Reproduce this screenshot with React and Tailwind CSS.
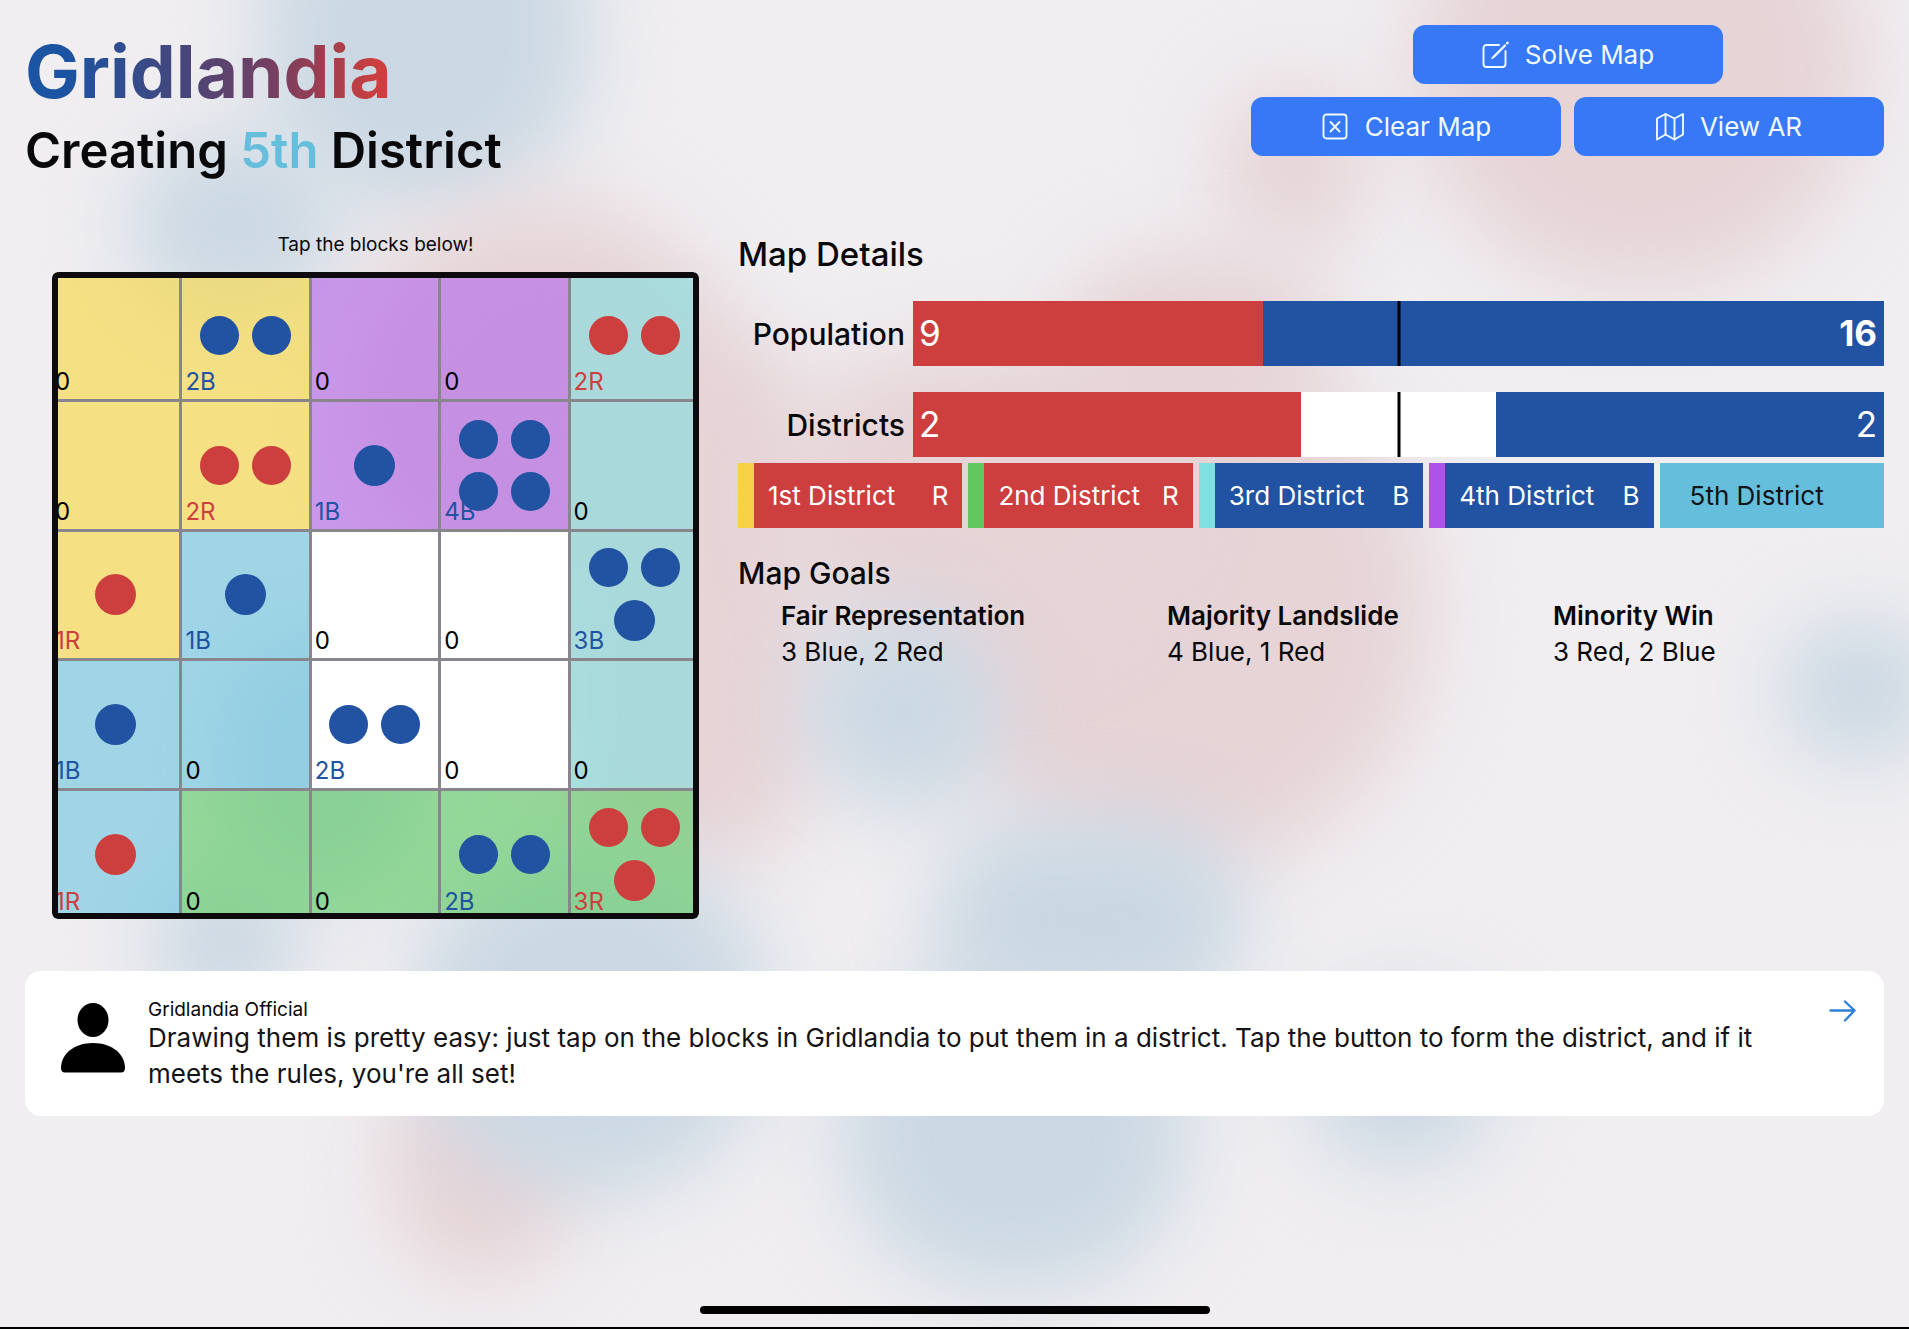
import React from "react";

const BLUE_HAZE = "#cbd8e3";
const RED_HAZE = "#e6d4d7";

const blobs = [
  { x: 425, y: 30, w: 330, h: 360, c: BLUE_HAZE },
  { x: 235, y: 225, w: 210, h: 180, c: BLUE_HAZE },
  { x: 225, y: 945, w: 150, h: 150, c: BLUE_HAZE },
  { x: 540, y: 400, w: 400, h: 400, c: RED_HAZE },
  { x: 690, y: 600, w: 260, h: 540, c: RED_HAZE },
  { x: 1640, y: 70, w: 450, h: 440, c: RED_HAZE },
  { x: 1295, y: 165, w: 150, h: 160, c: RED_HAZE },
  { x: 1200, y: 340, w: 260, h: 170, c: RED_HAZE },
  { x: 1180, y: 610, w: 500, h: 520, c: RED_HAZE },
  { x: 980, y: 500, w: 400, h: 300, c: RED_HAZE },
  { x: 480, y: 1170, w: 180, h: 220, c: RED_HAZE },
  { x: 320, y: 760, w: 200, h: 260, c: BLUE_HAZE },
  { x: 590, y: 1020, w: 360, h: 350, c: BLUE_HAZE },
  { x: 905, y: 710, w: 200, h: 200, c: BLUE_HAZE },
  { x: 1090, y: 920, w: 310, h: 210, c: BLUE_HAZE },
  { x: 1015, y: 1130, w: 350, h: 320, c: BLUE_HAZE },
  { x: 1400, y: 1080, w: 190, h: 170, c: BLUE_HAZE },
  { x: 1860, y: 690, w: 160, h: 140, c: BLUE_HAZE },
];

function Backdrop() {
  return (
    <div aria-hidden="true" className="pointer-events-none absolute inset-0 overflow-hidden">
      {blobs.map((b, i) => (
        <div
          key={i}
          className="absolute rounded-full blur-[40px]"
          style={{ left: b.x - b.w / 2, top: b.y - b.h / 2, width: b.w, height: b.h, background: b.c }}
        />
      ))}
    </div>
  );
}

const fills = {
  Y: "bg-[#f7d849]/65",
  P: "bg-[#b66ce8]/65",
  T: "bg-[#88dcdc]/65",
  C: "bg-[#74c8e0]/65",
  G: "bg-[#66cd6c]/65",
  W: "bg-white",
};

const board = [
  ["Y0", "Y2B", "P0", "P0", "T2R"],
  ["Y0", "Y2R", "P1B", "P4B", "T0"],
  ["Y1R", "C1B", "W0", "W0", "T3B"],
  ["C1B", "C0", "W2B", "W0", "T0"],
  ["C1R", "G0", "G0", "G2B", "G3R"],
];

function Cell({ code, row, col }) {
  const count = Number(code[1]);
  const party = code[2];
  const dot = party === "R" ? "bg-[#cc3f3e]" : "bg-[#2153a2]";
  const text = party === "R" ? "text-[#cc3f3e]" : party === "B" ? "text-[#2153a2]" : "text-black";
  const lines = [
    col > 0 ? "border-l" : "",
    col < 4 ? "border-r-2" : "",
    row > 0 ? "border-t" : "",
    row < 4 ? "border-b-2" : "",
  ].join(" ");
  return (
    <button
      type="button"
      aria-label={`Block ${row + 1}, ${col + 1}: ${code.slice(1)}`}
      className={`relative flex items-center justify-center bg-clip-padding ${fills[code[0]]} ${lines} border-[#88868c]`}
    >
      <span className={`absolute bottom-[3px] left-[3px] text-[24px] leading-7 ${text}`}>{code.slice(1)}</span>
      <span className={`relative flex flex-wrap justify-center gap-[13px] ${count === 1 ? "w-[41px]" : "w-[91px]"}`}>
        {Array.from({ length: count }, (_, i) => (
          <span
            key={i}
            className={`rounded-full ${dot} ${count % 2 === 1 && i === count - 1 ? "size-[41px]" : "size-[39px]"}`}
          />
        ))}
      </span>
    </button>
  );
}

function Board() {
  return (
    <section className="flex w-[647px] shrink-0 flex-col">
      <p className="mb-[13px] text-center text-[19px] leading-7">Tap the blocks below!</p>
      <div className="relative aspect-square overflow-hidden rounded-md">
        <div className="grid size-full grid-cols-5 grid-rows-5">
          {board.flatMap((r, y) => r.map((code, x) => <Cell key={`${x}-${y}`} code={code} row={y} col={x} />))}
        </div>
        <div className="pointer-events-none absolute inset-0 rounded-md border-6 border-[#0c0a0d]" />
      </div>
    </section>
  );
}

function EditIcon() {
  return (
    <svg viewBox="0 0 28 28" className="size-7" fill="none" stroke="currentColor" strokeWidth="1.900" strokeLinecap="round" strokeLinejoin="round">
      <path d="M18 4H5.500a3 3 0 0 0-3 3v16a3 3 0 0 0 3 3h16a3 3 0 0 0 3-3V10" />
      <path d="M12.500 16 24 4.500" strokeWidth="2.400" />
      <path d="M26.200 2.200l.3-.3" strokeWidth="2.600" />
      <path d="M11 17.500l1.500-1.500" strokeWidth="1.500" />
    </svg>
  );
}

function ClearIcon() {
  return (
    <svg viewBox="0 0 28 28" className="size-7" fill="none" stroke="currentColor" strokeWidth="1.900" strokeLinecap="round" strokeLinejoin="round">
      <rect x="2.500" y="1.500" width="23" height="24" rx="3" />
      <path d="M9.500 9l9 9.500M18.500 9l-9 9.500" />
    </svg>
  );
}

function MapIcon() {
  return (
    <svg viewBox="0 0 28 28" className="size-7" fill="none" stroke="currentColor" strokeWidth="1.900" strokeLinecap="round" strokeLinejoin="round">
      <path d="M1 5.500 9.500 1 18.500 5.500 27 1V21.500l-8.500 5-9-5L1 26.500z" />
      <path d="M9.500 1V21.500M18.500 5.500v21" />
    </svg>
  );
}

function ActionButton({ icon, children }) {
  return (
    <button type="button" className="flex h-[59px] w-[310px] items-center justify-center gap-4 rounded-xl bg-[#3678f5] text-[26px] text-[#eefaff]">
      {icon}
      {children}
    </button>
  );
}

function TallyBar({ label, red, blue, redShare, blueShare, boldBlue }) {
  return (
    <div className="flex items-center gap-2">
      <div className="w-[167px] text-right text-[30px] leading-9 font-medium">{label}</div>
      <div className="relative flex h-[65px] flex-1 justify-between bg-white text-[35px] text-white">
        <div className="flex items-center bg-[#cc3f3e] pl-[6px]" style={{ width: `${redShare}%` }}>{red}</div>
        <div className={`flex items-center justify-end bg-[#2153a2] pr-[7px] ${boldBlue ? "font-bold" : ""}`} style={{ width: `${blueShare}%` }}>{blue}</div>
        <div className="absolute inset-y-0 left-1/2 w-[3px] -translate-x-1/2 bg-black" />
      </div>
    </div>
  );
}

const districts = [
  { name: "1st District", party: "R", body: "bg-[#cc3f3e] text-white", stripe: "bg-[#f7d148]" },
  { name: "2nd District", party: "R", body: "bg-[#cc3f3e] text-white", stripe: "bg-[#62c75e]" },
  { name: "3rd District", party: "B", body: "bg-[#2153a2] text-white", stripe: "bg-[#80e0df]" },
  { name: "4th District", party: "B", body: "bg-[#2153a2] text-white", stripe: "bg-[#ac54e8]" },
  { name: "5th District", party: "", body: "bg-[#65bedc] text-[#101418]", stripe: "bg-[#65bedc]" },
];

const goals = [
  ["Fair Representation", "3 Blue, 2 Red"],
  ["Majority Landslide", "4 Blue, 1 Red"],
  ["Minority Win", "3 Red, 2 Blue"],
];

function Details() {
  return (
    <section className="flex min-w-0 flex-1 flex-col pt-[3px]">
      <h3 className="text-[33px] leading-10 font-medium">Map Details</h3>
      <div className="mt-[27px] flex flex-col gap-[26px]">
        <TallyBar label="Population" red="9" blue="16" redShare={36} blueShare={64} boldBlue />
        <TallyBar label="Districts" red="2" blue="2" redShare={40} blueShare={40} />
      </div>
      <ul className="mt-[6px] grid grid-cols-5 gap-[6px] text-[26px]">
        {districts.map((d) => (
          <li key={d.name} className={`flex h-[65px] ${d.body}`}>
            <span className={`w-4 ${d.stripe}`} />
            <span className="flex flex-1 items-center justify-between px-[14px] whitespace-nowrap">
              <span>{d.name}</span>
              <span>{d.party}</span>
            </span>
          </li>
        ))}
      </ul>
      <h3 className="mt-[25px] text-[30px] leading-10 font-medium">Map Goals</h3>
      <dl className="mt-[5px] grid grid-cols-3 gap-3 text-[26px] leading-9">
        {goals.map(([name, rule]) => (
          <div key={name} className="pl-[43px] whitespace-nowrap">
            <dt className="font-semibold">{name}</dt>
            <dd>{rule}</dd>
          </div>
        ))}
      </dl>
    </section>
  );
}

function Message() {
  return (
    <section className="flex min-h-[145px] items-start rounded-2xl bg-white pt-[29px] pr-7 pb-5 pl-9">
      <svg viewBox="0 0 64 70" className="mt-[3px] h-[70px] w-16 shrink-0" fill="#000">
        <ellipse cx="32" cy="17" rx="15.500" ry="17" />
        <path d="M0 65C0 51 13 40 32 40s32 11 32 25c0 3-1.500 4.500-4 4.500H4c-2.500 0-4-1.500-4-4.500z" />
      </svg>
      <div className="ml-[23px] flex-1">
        <p className="text-[19px] leading-5">Gridlandia Official</p>
        <p className="text-[26px] leading-9 text-[#151316]">
          Drawing them is pretty easy: just tap on the blocks in Gridlandia to put them in a district. Tap the button to form the district, and if it meets the rules, you're all set!
        </p>
      </div>
      <button type="button" aria-label="Next" className="ml-12 text-[#2f7fdc]">
        <svg viewBox="0 0 28 22" className="h-[22px] w-7" fill="none" stroke="currentColor" strokeWidth="2.400" strokeLinecap="round" strokeLinejoin="round">
          <path d="M2.500 10.500H26.500M17 1.500l9.500 9-9.500 10" />
        </svg>
      </button>
    </section>
  );
}

export default function App() {
  return (
    <div className="relative flex min-h-screen flex-col overflow-hidden border-b-2 border-black bg-[#f0eef1] px-[25px] pt-[25px] font-['Inter','Liberation_Sans',sans-serif] text-[#09080a]">
      <Backdrop />
      <header className="relative flex items-start justify-between">
        <div>
          <h1 className="w-fit bg-linear-[90deg,#1a54a3_10%,#4a4578_45%,#7b3e5e_70%,#cc3f3e_96%] bg-clip-text text-[73px] leading-[94px] font-bold text-transparent">Gridlandia</h1>
          <h2 className="text-[49px] leading-[64px] font-semibold">
            Creating <span className="text-[#65bedc]">5th</span> District
          </h2>
        </div>
        <div className="flex flex-col items-center gap-[13px]">
          <ActionButton icon={<EditIcon />}>Solve Map</ActionButton>
          <div className="flex gap-[13px]">
            <ActionButton icon={<ClearIcon />}>Clear Map</ActionButton>
            <ActionButton icon={<MapIcon />}>View AR</ActionButton>
          </div>
        </div>
      </header>
      <main className="relative mt-12 flex gap-[39px] pl-[27px]">
        <Board />
        <Details />
      </main>
      <div className="relative mt-[52px]">
        <Message />
      </div>
      <div className="relative mx-auto mt-auto mb-[13px] h-2 w-[510px] rounded-full bg-black" />
    </div>
  );
}
